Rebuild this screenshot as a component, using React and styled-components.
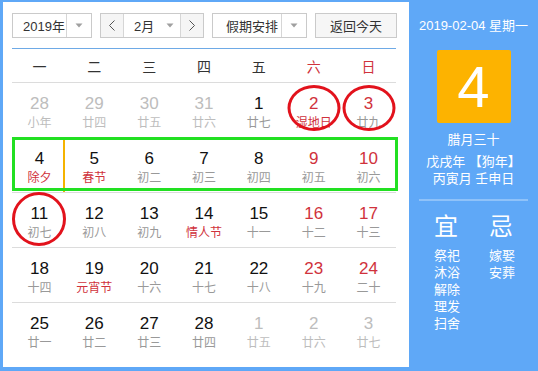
import React from "react";
import styled, { createGlobalStyle } from "styled-components";

const BLUE = "#5fa8f7";
const RED = "#d0323c";
const FONT = `"Liberation Sans", "Noto Sans CJK SC", sans-serif`;

const GlobalStyle = createGlobalStyle`
  html, body {
    margin: 0;
    padding: 0;
    background: ${BLUE};
    font-family: ${FONT};
  }
`;

const WEEKDAYS = ["一", "二", "三", "四", "五", "六", "日"];

// dim = other month, red = weekend number, lunarRed = festival
const WEEKS = [
  [
    { d: 28, l: "小年", dim: true },
    { d: 29, l: "廿四", dim: true },
    { d: 30, l: "廿五", dim: true },
    { d: 31, l: "廿六", dim: true },
    { d: 1, l: "廿七" },
    { d: 2, l: "湿地日", red: true, lunarRed: true, ring: { w: 53, h: 46, top: 2 } },
    { d: 3, l: "廿九", red: true, ring: { w: 53, h: 46, top: 2 } },
  ],
  [
    { d: 4, l: "除夕", lunarRed: true, today: true },
    { d: 5, l: "春节", lunarRed: true },
    { d: 6, l: "初二" },
    { d: 7, l: "初三" },
    { d: 8, l: "初四" },
    { d: 9, l: "初五", red: true },
    { d: 10, l: "初六", red: true },
  ],
  [
    { d: 11, l: "初七", ring: { w: 54, h: 54, top: -1 } },
    { d: 12, l: "初八" },
    { d: 13, l: "初九" },
    { d: 14, l: "情人节", lunarRed: true },
    { d: 15, l: "十一" },
    { d: 16, l: "十二", red: true },
    { d: 17, l: "十三", red: true },
  ],
  [
    { d: 18, l: "十四" },
    { d: 19, l: "元宵节", lunarRed: true },
    { d: 20, l: "十六" },
    { d: 21, l: "十七" },
    { d: 22, l: "十八" },
    { d: 23, l: "十九", red: true },
    { d: 24, l: "二十", red: true },
  ],
  [
    { d: 25, l: "廿一" },
    { d: 26, l: "廿二" },
    { d: 27, l: "廿三" },
    { d: 28, l: "廿四" },
    { d: 1, l: "廿五", dim: true },
    { d: 2, l: "廿六", dim: true },
    { d: 3, l: "廿七", dim: true },
  ],
];

const GOOD = ["祭祀", "沐浴", "解除", "理发", "扫舍"];
const BAD = ["嫁娶", "安葬"];

const Caret = () => (
  <svg width="8" height="5" viewBox="0 0 8 5">
    <path d="M0.5 0.5 L7.5 0.5 L4 4.5 Z" fill="#a0a0a0" />
  </svg>
);

const Chevron = ({ dir }) => (
  <svg width="8" height="11" viewBox="0 0 8 11">
    <polyline
      points={dir === "left" ? "6.5,0.5 1.5,5.5 6.5,10.5" : "1.5,0.5 6.5,5.5 1.5,10.5"}
      fill="none"
      stroke="#555"
      strokeWidth="1"
    />
  </svg>
);

const App = () => {
  return (
    <>
      <GlobalStyle />
      <Frame>
        <MainPanel>
          <Toolbar>
            <SelectBox $width={80}>
              <SelectLabel>2019年</SelectLabel>
              <ArrowPart>
                <Caret />
              </ArrowPart>
            </SelectBox>
            <SelectBox $width={104}>
              <NavButton>
                <Chevron dir="left" />
              </NavButton>
              <SelectLabel>2月</SelectLabel>
              <ArrowPart $plain>
                <Caret />
              </ArrowPart>
              <NavButton $right>
                <Chevron dir="right" />
              </NavButton>
            </SelectBox>
            <SelectBox $width={95}>
              <SelectLabel $pad={13}>假期安排</SelectLabel>
              <ArrowPart>
                <Caret />
              </ArrowPart>
            </SelectBox>
            <TodayButton>返回今天</TodayButton>
          </Toolbar>

          <Table>
            <HeadRow>
              {WEEKDAYS.map((w, i) => (
                <HeadCell key={w} $red={i >= 5}>
                  {w}
                </HeadCell>
              ))}
            </HeadRow>
            {WEEKS.map((week, wi) => (
              <WeekRow key={wi} $highlight={wi === 1} $last={wi === WEEKS.length - 1}>
                {week.map((c, ci) => (
                  <DayCell key={ci} $today={c.today}>
                    <DayNum $dim={c.dim} $red={c.red}>
                      {c.d}
                    </DayNum>
                    <Lunar $dim={c.dim} $red={c.lunarRed}>
                      {c.l}
                    </Lunar>
                    {c.ring && (
                      <Ring $w={c.ring.w} $h={c.ring.h} $top={c.ring.top} />
                    )}
                  </DayCell>
                ))}
              </WeekRow>
            ))}
          </Table>
        </MainPanel>

        <SidePanel>
          <DateLine>2019-02-04 星期一</DateLine>
          <BigDay>4</BigDay>
          <LunarMonth>腊月三十</LunarMonth>
          <LunarLine>戊戌年 【狗年】</LunarLine>
          <LunarLine>丙寅月 壬申日</LunarLine>
          <Divider />
          <Almanac>
            <AlmanacCol>
              <AlmanacHead>宜</AlmanacHead>
              {GOOD.map((g) => (
                <AlmanacItem key={g}>{g}</AlmanacItem>
              ))}
            </AlmanacCol>
            <AlmanacCol>
              <AlmanacHead>忌</AlmanacHead>
              {BAD.map((b) => (
                <AlmanacItem key={b}>{b}</AlmanacItem>
              ))}
            </AlmanacCol>
          </Almanac>
        </SidePanel>
      </Frame>
    </>
  );
};

const Frame = styled.div`
  display: flex;
  width: 538px;
  height: 371px;
  background: ${BLUE};
  overflow: hidden;
`;

const MainPanel = styled.div`
  flex: 0 0 405px;
  height: 365px;
  margin: 2px 0 4px 3px;
  padding: 11px 12px 0 9px;
  box-sizing: border-box;
  background: #fff;
`;

const Toolbar = styled.div`
  display: flex;
  justify-content: space-between;
  width: 385px;
  height: 25px;
`;

const SelectBox = styled.div`
  display: flex;
  width: ${(p) => p.$width}px;
  height: 25px;
  box-sizing: border-box;
  border: 1px solid #cacaca;
  background: #fff;
`;

const SelectLabel = styled.div`
  flex: 1;
  display: flex;
  align-items: center;
  padding-left: ${(p) => p.$pad ?? 10}px;
  font-size: 13px;
  color: #333;
  white-space: nowrap;
`;

const ArrowPart = styled.div`
  width: ${(p) => (p.$plain ? 20 : 24)}px;
  display: flex;
  align-items: center;
  justify-content: center;
  border-left: ${(p) => (p.$plain ? "none" : "1px solid #d6d6d6")};
`;

const NavButton = styled.div`
  width: 22px;
  display: flex;
  align-items: center;
  justify-content: center;
  background: #f5f5f5;
  border-left: ${(p) => (p.$right ? "1px solid #d6d6d6" : "none")};
  border-right: ${(p) => (p.$right ? "none" : "1px solid #d6d6d6")};
`;

const TodayButton = styled.div`
  width: 82px;
  height: 25px;
  box-sizing: border-box;
  display: flex;
  align-items: center;
  justify-content: center;
  border: 1px solid #cacaca;
  background: #f6f6f6;
  font-size: 13px;
  color: #333;
`;

const Table = styled.div`
  width: 384px;
  margin-top: 10px;
  border-top: 1px solid #6eaae6;
`;

const HeadRow = styled.div`
  display: grid;
  grid-template-columns: repeat(7, 1fr);
  height: 33px;
  border-bottom: 1px solid #dcdcdc;
`;

const HeadCell = styled.div`
  display: flex;
  align-items: center;
  justify-content: center;
  font-size: 14px;
  color: ${(p) => (p.$red ? RED : "#333")};
`;

const WeekRow = styled.div`
  position: relative;
  display: grid;
  grid-template-columns: repeat(7, 1fr);
  height: 55px;
  box-sizing: border-box;
  border-bottom: ${(p) => (p.$last ? "none" : "1px solid #dcdcdc")};

  ${(p) =>
    p.$highlight &&
    `
    &::after {
      content: "";
      position: absolute;
      top: -1px;
      left: 0;
      right: -2px;
      bottom: 1px;
      border: 3px solid #22e022;
      pointer-events: none;
      z-index: 2;
    }
  `}
`;

const DayCell = styled.div`
  position: relative;
  display: flex;
  flex-direction: column;
  align-items: center;
  padding-top: 10px;

  ${(p) =>
    p.$today &&
    `
    &::before {
      content: "";
      position: absolute;
      top: 0;
      bottom: 0;
      right: 2px;
      width: 2px;
      background: #f5b300;
    }
  `}
`;

const DayNum = styled.div`
  font-size: 17px;
  line-height: 22px;
  color: ${(p) => (p.$dim ? "#bdbdbd" : p.$red ? RED : "#111")};
`;

const Lunar = styled.div`
  font-size: 12px;
  line-height: 16px;
  color: ${(p) => (p.$dim ? "#bdbdbd" : p.$red ? RED : "#999")};
  white-space: nowrap;
`;

const Ring = styled.span`
  position: absolute;
  left: 50%;
  top: ${(p) => p.$top}px;
  width: ${(p) => p.$w}px;
  height: ${(p) => p.$h}px;
  transform: translateX(-50%);
  box-sizing: border-box;
  border: 3px solid #e2121c;
  border-radius: 50%;
  pointer-events: none;
`;

const SidePanel = styled.div`
  flex: 1;
  min-width: 0;
  display: flex;
  flex-direction: column;
  align-items: center;
  padding-top: 17px;
  color: #fff;
`;

const DateLine = styled.div`
  font-size: 13px;
  line-height: 18px;
  white-space: nowrap;
`;

const BigDay = styled.div`
  width: 74px;
  height: 73px;
  margin-top: 15px;
  display: flex;
  align-items: center;
  justify-content: center;
  background: #fdb300;
  border-radius: 2px;
  font-family: "Liberation Sans", sans-serif;
  font-size: 58px;
  color: #fff;
`;

const LunarMonth = styled.div`
  margin-top: 8px;
  font-size: 13px;
  line-height: 18px;
`;

const LunarLine = styled.div`
  font-size: 13px;
  line-height: 17px;
  white-space: nowrap;

  ${LunarMonth} + & {
    margin-top: 4px;
  }
`;

const Divider = styled.div`
  align-self: stretch;
  height: 2px;
  margin: 12px 10px 0;
  background: rgba(255, 255, 255, 0.3);
`;

const Almanac = styled.div`
  align-self: stretch;
  display: flex;
  padding-left: 25px;
  margin-top: 12px;
`;

const AlmanacCol = styled.div`
  width: 55px;
  flex-shrink: 0;
  display: flex;
  flex-direction: column;
`;

const AlmanacHead = styled.div`
  font-size: 24px;
  line-height: 28px;
  margin-bottom: 6px;
`;

const AlmanacItem = styled.div`
  font-size: 13px;
  line-height: 17px;
`;

export default App;
